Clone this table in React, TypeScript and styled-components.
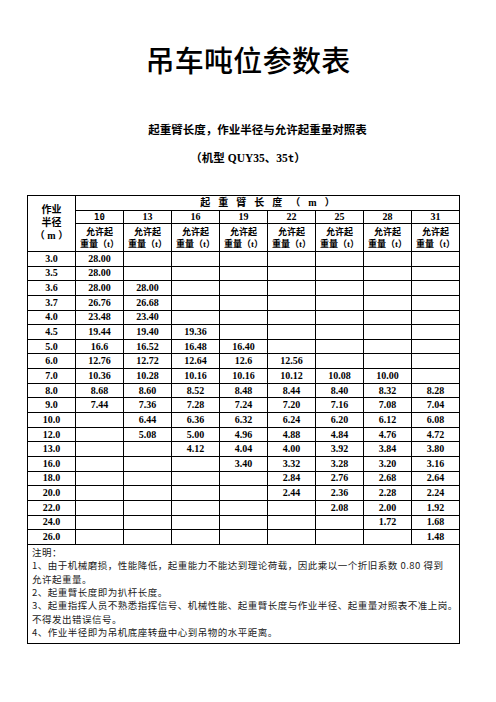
import React from "react";
import styled, { createGlobalStyle } from "styled-components";

const Global = createGlobalStyle`
  html, body { margin: 0; padding: 0; background: #fff; }
  body { width: 496px; min-height: 702px; color: #000; }
`;

const Page = styled.div`
  width: 496px;
  min-height: 702px;
  display: flex;
  flex-direction: column;
  font-family: "Liberation Serif", "Noto Sans CJK SC", serif;
`;

const Title = styled.h1`
  margin: 41px 0 0;
  font-family: "Noto Sans CJK SC", sans-serif;
  font-weight: 500;
  font-size: 29px;
  line-height: 36px;
  text-align: center;
  letter-spacing: 0.3px;
`;

const Subtitle = styled.div<{ $shift?: number; $top: number }>`
  margin-top: ${(p) => p.$top}px;
  padding-left: ${(p) => p.$shift ?? 0}px;
  font-family: "Liberation Serif", "Noto Sans CJK SC", serif;
  font-weight: 700;
  font-size: 11.5px;
  line-height: 16px;
  text-align: center;
`;

const Mono = styled.span`
  font-family: "DejaVu Sans Mono", monospace;
  font-size: 0.92em;
`;

const Table = styled.table`
  margin: 29px 0 0 27px;
  width: 433px;
  border-collapse: collapse;
  table-layout: fixed;
  border: 1px solid #000;
`;

const Row = styled.tr<{ $h: number }>`
  height: ${(p) => p.$h}px;
`;

const Cell = styled.td`
  border: 1px solid #000;
  padding: 0;
  text-align: center;
  vertical-align: middle;
  font-family: "Liberation Serif", "Noto Sans CJK SC", serif;
  font-weight: 700;
  font-size: 10px;
  line-height: 12px;
  white-space: nowrap;
  overflow: hidden;
`;

const CornerCell = styled(Cell)`
  font-size: 10px;
  line-height: 13px;
  padding-bottom: 2px;
`;

const SpanCell = styled(Cell)`
  letter-spacing: 8px;
  padding-left: 8px;
`;

const LenCell = styled(Cell)<{ $mono?: boolean }>`
  font-family: ${(p) =>
    p.$mono ? `"DejaVu Sans Mono", monospace` : `"Liberation Serif", serif`};
  font-size: ${(p) => (p.$mono ? 9 : 10)}px;
`;

const LabelCell = styled(Cell)`
  font-size: 9px;
  line-height: 12.5px;
  padding-top: 1px;
`;

const NotesCell = styled.td`
  border: 1px solid #000;
  padding: 1px 4px 3px;
  text-align: left;
  vertical-align: top;
  font-family: "Noto Sans CJK SC", sans-serif;
  font-weight: 400;
  font-size: 9.5px;
  letter-spacing: 0.5px;
  line-height: 13.4px;
  color: #1a1a1a;
`;

const NoteLine = styled.div`
  white-space: nowrap;
`;

const lengths = ["10", "13", "16", "19", "22", "25", "28", "31"];

const rows: [string, string[]][] = [
  ["3.0", ["28.00"]],
  ["3.5", ["28.00"]],
  ["3.6", ["28.00", "28.00"]],
  ["3.7", ["26.76", "26.68"]],
  ["4.0", ["23.48", "23.40"]],
  ["4.5", ["19.44", "19.40", "19.36"]],
  ["5.0", ["16.6", "16.52", "16.48", "16.40"]],
  ["6.0", ["12.76", "12.72", "12.64", "12.6", "12.56"]],
  ["7.0", ["10.36", "10.28", "10.16", "10.16", "10.12", "10.08", "10.00"]],
  ["8.0", ["8.68", "8.60", "8.52", "8.48", "8.44", "8.40", "8.32", "8.28"]],
  ["9.0", ["7.44", "7.36", "7.28", "7.24", "7.20", "7.16", "7.08", "7.04"]],
  ["10.0", ["", "6.44", "6.36", "6.32", "6.24", "6.20", "6.12", "6.08"]],
  ["12.0", ["", "5.08", "5.00", "4.96", "4.88", "4.84", "4.76", "4.72"]],
  ["13.0", ["", "", "4.12", "4.04", "4.00", "3.92", "3.84", "3.80"]],
  ["16.0", ["", "", "", "3.40", "3.32", "3.28", "3.20", "3.16"]],
  ["18.0", ["", "", "", "", "2.84", "2.76", "2.68", "2.64"]],
  ["20.0", ["", "", "", "", "2.44", "2.36", "2.28", "2.24"]],
  ["22.0", ["", "", "", "", "", "2.08", "2.00", "1.92"]],
  ["24.0", ["", "", "", "", "", "", "1.72", "1.68"]],
  ["26.0", ["", "", "", "", "", "", "", "1.48"]],
];

const notes = [
  "注明：",
  "1、由于机械磨损，性能降低，起重能力不能达到理论荷载，因此乘以一个折旧系数 0.80 得到",
  "允许起重量。",
  "2、起重臂长度即为扒杆长度。",
  "3、起重指挥人员不熟悉指挥信号、机械性能、起重臂长度与作业半径、起重量对照表不准上岗。",
  "不得发出错误信号。",
  "4、作业半径即为吊机底座转盘中心到吊物的水平距离。",
];

export default function App() {
  return (
    <>
      <Global />
      <Page>
        <Title>吊车吨位参数表</Title>
        <Subtitle $top={45} $shift={19}>
          起重臂长度，作业半径与允许起重量对照表
        </Subtitle>
        <Subtitle $top={12}>
          （机型 QUY35、35<Mono>t</Mono>）
        </Subtitle>
        <Table>
          <colgroup>
            {Array.from({ length: 9 }).map((_, i) => (
              <col key={i} />
            ))}
          </colgroup>
          <tbody>
            <Row $h={15}>
              <CornerCell rowSpan={3}>
                作业
                <br />
                半径
                <br />（ m ）
              </CornerCell>
              <SpanCell colSpan={8}>起重臂长度（m）</SpanCell>
            </Row>
            <Row $h={12}>
              {lengths.map((l, i) => (
                <LenCell key={l} $mono={i === 0}>
                  {l}
                </LenCell>
              ))}
            </Row>
            <Row $h={28}>
              {lengths.map((l) => (
                <LabelCell key={l}>
                  允许起
                  <br />
                  重量（t）
                </LabelCell>
              ))}
            </Row>
            {rows.map(([r, vals]) => (
              <Row $h={14.65} key={r}>
                <Cell>{r}</Cell>
                {lengths.map((_, i) => (
                  <Cell key={i}>{vals[i] ?? ""}</Cell>
                ))}
              </Row>
            ))}
            <tr>
              <NotesCell colSpan={9}>
                {notes.map((n, i) => (
                  <NoteLine key={i}>{n}</NoteLine>
                ))}
              </NotesCell>
            </tr>
          </tbody>
        </Table>
      </Page>
    </>
  );
}
